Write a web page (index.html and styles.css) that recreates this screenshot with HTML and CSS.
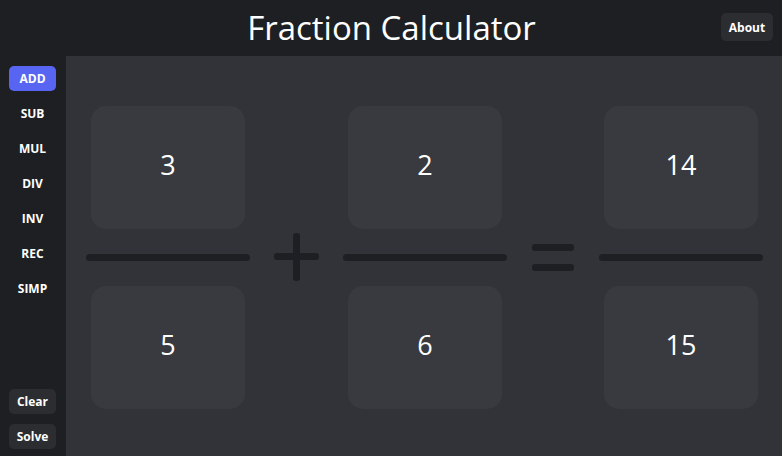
FILE: index.html
```html
<!DOCTYPE html>
<html>
<head>
<meta charset="utf-8">
<link rel="stylesheet" href="styles.css">
</head>
<body>
<header class="header">
  <h1 class="title">Fraction Calculator</h1>
  <button class="btn about">About</button>
</header>
<div class="layout">
  <nav class="sidebar">
    <div class="ops">
      <button class="btn op active">ADD</button>
      <button class="btn op">SUB</button>
      <button class="btn op">MUL</button>
      <button class="btn op">DIV</button>
      <button class="btn op">INV</button>
      <button class="btn op">REC</button>
      <button class="btn op">SIMP</button>
    </div>
    <div class="actions">
      <button class="btn act">Clear</button>
      <button class="btn act">Solve</button>
    </div>
  </nav>
  <main class="main">
    <div class="fraction">
      <div class="box">3</div>
      <div class="bar"></div>
      <div class="box">5</div>
    </div>
    <div class="plus"><span class="ph"></span><span class="pv"></span></div>
    <div class="fraction">
      <div class="box">2</div>
      <div class="bar"></div>
      <div class="box">6</div>
    </div>
    <div class="equals"><span class="eq"></span><span class="eq"></span></div>
    <div class="fraction">
      <div class="box">14</div>
      <div class="bar"></div>
      <div class="box">15</div>
    </div>
  </main>
</div>
</body>
</html>
```
FILE: styles.css
```css
* { box-sizing: border-box; }
html, body { margin: 0; padding: 0; }
body {
  width: 782px;
  height: 456px;
  overflow: hidden;
  background: #313338;
  font-family: "Open Sans", "Noto Sans", sans-serif;
  color: #fff;
}
.header {
  height: 56px;
  background: #1e1f22;
  display: flex;
  align-items: center;
  justify-content: center;
  position: relative;
}
.title {
  margin: 0;
  font-weight: 400;
  font-size: 33px;
  line-height: 56px;
  padding-left: 1px;
}
.btn {
  border: none;
  color: #fff;
  font-family: "Open Sans", "Noto Sans", sans-serif;
  font-weight: 700;
  font-size: 12px;
  border-radius: 5px;
  cursor: pointer;
  padding: 0;
}
.about {
  position: absolute;
  right: 9px;
  top: 13px;
  width: 52px;
  height: 28px;
  background: #2b2d31;
}
.layout {
  display: flex;
  height: 400px;
}
.sidebar {
  width: 66px;
  background: #1e1f22;
  display: flex;
  flex-direction: column;
  justify-content: space-between;
  padding: 10px 0 7px 9px;
}
.ops, .actions {
  display: flex;
  flex-direction: column;
  gap: 10px;
}
.op, .act {
  width: 47px;
  height: 25px;
  background: transparent;
}
.op.active { background: #5865f2; }
.act { background: #2b2d31; }
.main {
  flex: 1;
  display: flex;
  align-items: center;
  justify-content: flex-start;
  gap: 24px;
  padding: 2px 0 0 20px;
}
.fraction {
  width: 164px;
  display: flex;
  flex-direction: column;
  align-items: center;
  gap: 25px;
}
.box {
  width: 154px;
  height: 123px;
  background: #383a40;
  border-radius: 15px;
  display: flex;
  align-items: center;
  justify-content: center;
  font-size: 27px;
  padding-bottom: 5px;
}
.bar {
  width: 164px;
  height: 7px;
  background: #1e1f22;
  border-radius: 4px;
}
.plus {
  width: 45px;
  height: 48px;
  position: relative;
}
.ph, .pv {
  position: absolute;
  background: #1e1f22;
  border-radius: 3px;
}
.ph { left: 0; right: 0; top: 20px; height: 7px; }
.pv { top: 0; bottom: 0; left: 19px; width: 7px; }
.equals {
  width: 42px;
  margin: 0 1px;
  display: flex;
  flex-direction: column;
  gap: 13px;
}
.eq {
  display: block;
  height: 7px;
  background: #1e1f22;
  border-radius: 3px;
}
```
